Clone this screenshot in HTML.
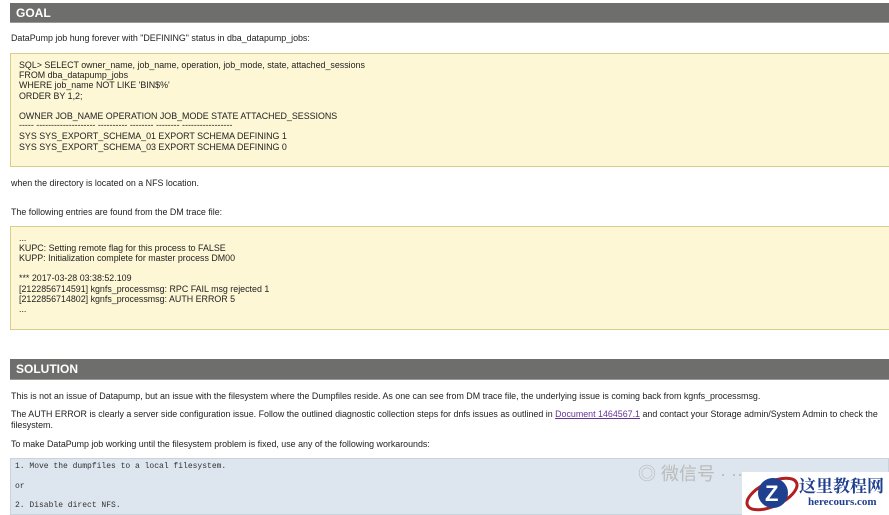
<!DOCTYPE html>
<html><head><meta charset="utf-8"><style>
body{margin:0;width:889px;height:515px;overflow:hidden;background:#fff;font-family:"Liberation Sans","Noto Sans CJK SC",sans-serif;font-size:8.9px;color:#222;position:relative}
.a{position:absolute;white-space:nowrap;line-height:10px}
.bar{position:absolute;left:10px;width:879px;background:#6e6e6c;color:#fff;font-weight:bold;font-size:12px;line-height:20px;padding-left:6px;box-sizing:border-box;border-bottom:1px solid #999}
.box{position:absolute;left:10px;width:885px;background:#fdf7d6;border:1px solid #d6cf8a;box-sizing:border-box}
.mono{font-family:"Liberation Mono",monospace;font-size:8px;color:#333}
</style></head><body>
<div class="bar" style="top:3px;height:20px">GOAL</div>
<div class="a" style="left:11px;top:33px">DataPump job hung forever with "DEFINING" status in dba_datapump_jobs:</div>
<div class="box" style="top:53px;height:114px"></div>
<div class="a" style="left:19px;top:60px">SQL&gt; SELECT owner_name, job_name, operation, job_mode, state, attached_sessions</div>
<div class="a" style="left:19px;top:70px">FROM dba_datapump_jobs</div>
<div class="a" style="left:19px;top:80px">WHERE job_name NOT LIKE 'BIN$%'</div>
<div class="a" style="left:19px;top:91px">ORDER BY 1,2;</div>
<div class="a" style="left:19px;top:111px">OWNER JOB_NAME OPERATION JOB_MODE STATE ATTACHED_SESSIONS</div>
<div class="a" style="left:19px;top:120px">----- -------------------- ---------- -------- -------- -----------------</div>
<div class="a" style="left:19px;top:131px">SYS SYS_EXPORT_SCHEMA_01 EXPORT SCHEMA DEFINING 1</div>
<div class="a" style="left:19px;top:142px">SYS SYS_EXPORT_SCHEMA_03 EXPORT SCHEMA DEFINING 0</div>
<div class="a" style="left:11px;top:178px">when the directory is located on a NFS location.</div>
<div class="a" style="left:11px;top:207px">The following entries are found from the DM trace file:</div>
<div class="box" style="top:226px;height:104px"></div>
<div class="a" style="left:19px;top:233px">...</div>
<div class="a" style="left:19px;top:243px">KUPC: Setting remote flag for this process to FALSE</div>
<div class="a" style="left:19px;top:253px">KUPP: Initialization complete for master process DM00</div>
<div class="a" style="left:19px;top:273px">*** 2017-03-28 03:38:52.109</div>
<div class="a" style="left:19px;top:284px">[2122856714591] kgnfs_processmsg: RPC FAIL msg rejected 1</div>
<div class="a" style="left:19px;top:294px">[2122856714802] kgnfs_processmsg: AUTH ERROR 5</div>
<div class="a" style="left:19px;top:304px">...</div>
<div class="bar" style="top:359px;height:21px">SOLUTION</div>
<div class="a" style="left:11px;top:391px">This is not an issue of Datapump, but an issue with the filesystem where the Dumpfiles reside. As one can see from DM trace file, the underlying issue is coming back from kgnfs_processmsg.</div>
<div class="a" style="left:11px;top:409px">The AUTH ERROR is clearly a server side configuration issue. Follow the outlined diagnostic collection steps for dnfs issues as outlined in <span style="color:#663399;text-decoration:underline">Document 1464567.1</span> and contact your Storage admin/System Admin to check the</div>
<div class="a" style="left:11px;top:420px">filesystem.</div>
<div class="a" style="left:11px;top:439px">To make DataPump job working until the filesystem problem is fixed, use any of the following workarounds:</div>
<div style="position:absolute;left:10px;top:458px;width:879px;height:57px;background:#dde6ee;border:1px solid #c8d3dc;box-sizing:border-box"></div>
<div class="a mono" style="left:15px;top:462px">1. Move the dumpfiles to a local filesystem.</div>
<div class="a mono" style="left:15px;top:482px">or</div>
<div class="a mono" style="left:15px;top:501px">2. Disable direct NFS.</div>
<div class="a" style="left:638px;top:462px;font-size:18px;line-height:24px;color:#bbb">◎ 微信号 · ·· ·· ·</div>
<div style="position:absolute;left:742px;top:472px;width:147px;height:43px;background:#fff"></div>
<svg style="position:absolute;left:742px;top:470px" width="60" height="45"><ellipse cx="30" cy="24" rx="27" ry="12" fill="none" stroke="#b02020" stroke-width="3" transform="rotate(-25 30 24)"/><circle cx="31" cy="23" r="15" fill="#1f3f8f"/><text x="23" y="31" font-size="22" font-weight="bold" fill="#fff" font-family="Liberation Sans">Z</text></svg>
<div class="a" style="left:799px;top:475px;font-size:17px;line-height:20px;font-weight:bold;color:#1f3f8f;font-family:'Noto Serif CJK SC',serif">这里教程网</div>
<div class="a" style="left:808px;top:497px;font-size:11px;font-weight:bold;color:#1f3f8f;font-family:'Liberation Serif',serif">herecours.com</div>
</body></html>
